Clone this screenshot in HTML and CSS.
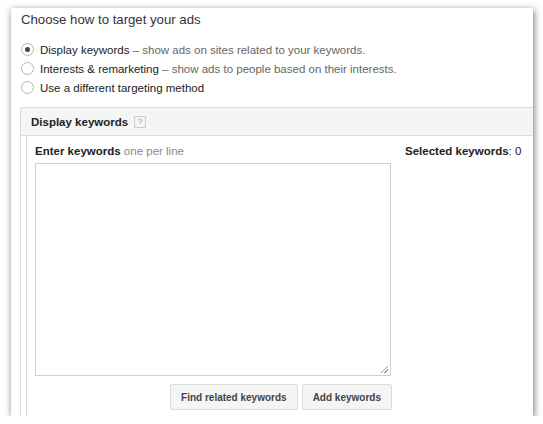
FILE: index.html
```html
<!DOCTYPE html>
<html>
<head>
<meta charset="utf-8">
<link rel="stylesheet" href="styles.css">
</head>
<body>
<div class="card">
  <h1 class="title">Choose how to target your ads</h1>
  <div class="options">
    <div class="opt"><span class="radio checked"></span><span class="lbl">Display keywords</span><span class="desc"> – show ads on sites related to your keywords.</span></div>
    <div class="opt"><span class="radio"></span><span class="lbl">Interests &amp; remarketing</span><span class="desc"> – show ads to people based on their interests.</span></div>
    <div class="opt"><span class="radio"></span><span class="lbl">Use a different targeting method</span></div>
  </div>
  <div class="section">
    <div class="section-head"><span class="sh-title">Display keywords</span><span class="help">?</span></div>
    <div class="inner">
      <div class="row">
        <div class="left">
          <div class="label"><b>Enter keywords</b> <span class="hint">one per line</span></div>
          <div class="textarea"><span class="grip"></span></div>
          <div class="buttons">
            <span class="btn">Find related keywords</span>
            <span class="btn">Add keywords</span>
          </div>
        </div>
        <div class="right"><b>Selected keywords</b>: 0</div>
      </div>
    </div>
  </div>
</div>
</body>
</html>
```
FILE: styles.css
```css
html, body { margin: 0; padding: 0; background: #fff; }
body { font-family: Arial, "Liberation Sans", sans-serif; color: #222; }
.card {
  margin: 8px 10px 0 11px;
  height: 408px;
  background: #fff;
  box-shadow: 1px 2px 7px rgba(0,0,0,0.55);
  overflow: hidden;
  padding-left: 10px;
  box-sizing: border-box;
}
.title {
  margin: 0;
  padding-top: 3px;
  font-size: 13.2px;
  font-weight: normal;
  color: #333;
  line-height: 17px;
}
.options { margin-top: 12px; }
.opt {
  display: flex;
  align-items: center;
  height: 19px;
  font-size: 11.5px;
  color: #222;
}
.radio {
  width: 11px; height: 11px;
  border: 1px solid #b5b5b5;
  border-radius: 50%;
  margin-right: 6px;
  display: flex; align-items: center; justify-content: center;
  background: #fff;
}
.radio.checked::after {
  content: ""; width: 5px; height: 5px; border-radius: 50%; background: #444;
}
.desc { color: #666; white-space: pre; }
.section {
  margin-top: 10px;
  margin-left: -1px;
  margin-right: -20px;
  border: 1px solid #dcdcdc;
  height: 400px;
}
.section-head {
  height: 27px;
  background: #f5f5f5;
  border-bottom: 1px solid #dcdcdc;
  display: flex; align-items: center;
  padding-left: 10px;
  font-size: 11.5px; font-weight: bold; color: #222;
}
.help {
  margin-left: 6px;
  width: 10px; height: 10px;
  border: 1px solid #ccc;
  background: #f3f3f3;
  color: #999;
  font-size: 8px; font-weight: normal;
  display: flex; align-items: center; justify-content: center;
}
.inner {
  margin-left: 5px;
  border-left: 1px solid #dcdcdc;
  height: 300px;
  padding-left: 8px;
}
.row { display: flex; }
.left { width: 357px; }
.label { font-size: 11.5px; padding-top: 8px; line-height: 14px; color: #222; }
.hint { color: #888; }
.textarea {
  margin-top: 5px;
  width: 356px; height: 213px;
  border: 1px solid #cfcfcf;
  box-sizing: border-box;
  position: relative;
}
.grip {
  position: absolute; right: 2px; bottom: 2px;
  width: 7px; height: 7px;
  background: linear-gradient(135deg, transparent 45%, #999 45%, #999 55%, transparent 55%, transparent 70%, #999 70%, #999 80%, transparent 80%);
}
.buttons { display: flex; justify-content: flex-end; gap: 4px; margin-top: 8px; }
.btn {
  height: 26px; box-sizing: border-box;
  border: 1px solid #dcdcdc;
  background: #f5f5f5;
  font-size: 10px; font-weight: bold; color: #444;
  display: flex; align-items: center; padding: 0 10px;
  border-radius: 2px;
}
.right { margin-left: 13px; padding-top: 8px; font-size: 11.5px; line-height: 14px; color: #222; }
```
